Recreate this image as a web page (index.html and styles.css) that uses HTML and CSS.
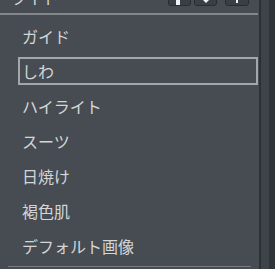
FILE: index.html
```html
<!DOCTYPE html>
<html lang="ja">
<head>
  <meta charset="UTF-8">
  <meta name="viewport" content="width=device-width, initial-scale=1.0">
  <title>レタッチ</title>
  <link rel="stylesheet" href="styles.css">
</head>
<body>
  <div class="app">
    <div class="panel">
      <div class="panel-head">
        <span class="panel-title">ライト</span>
        <div class="tools">
          <button class="tool tool-a"><span class="bar"></span></button>
          <button class="tool tool-b">
            <svg width="10" height="6" viewBox="0 0 10 6"><path d="M0 0 L10 0 L5 5 Z" fill="#f2f2f2"/></svg>
          </button>
          <button class="tool tool-c"><span class="dot"></span></button>
        </div>
      </div>
      <hr class="rule rule-top">
      <ul class="menu">
        <li class="menu-item">ガイド</li>
        <li class="menu-item is-selected">しわ</li>
        <li class="menu-item">ハイライト</li>
        <li class="menu-item">スーツ</li>
        <li class="menu-item">日焼け</li>
        <li class="menu-item">褐色肌</li>
        <li class="menu-item">デフォルト画像</li>
      </ul>
      <hr class="rule rule-bottom">
    </div>
    <div class="scrollbar">
      <div class="track"></div>
    </div>
  </div>
</body>
</html>
```

FILE: styles.css
```css
body {
  margin: 0;
  padding: 0;
  background-color: #464c52;
  color: #d3d6d8;
  font-family: "Noto Sans CJK JP", "Noto Sans", sans-serif;
  overflow: hidden;
}
.app {
  display: flex;
  width: 275px;
  height: 269px;
  overflow: hidden;
}
.panel {
  width: 261px;
  display: flex;
  flex-direction: column;
}
.panel-head {
  display: flex;
  align-items: flex-end;
  height: 20px;
  margin-top: -14px;
  padding-left: 10px;
  padding-right: 10px;
}
.panel-title {
  font-size: 16px;
  line-height: 16px;
  margin-bottom: 1px;
}
.tools {
  display: flex;
  margin-left: auto;
}
.tool {
  width: 23px;
  height: 20px;
  padding: 0;
  background: #3a3f45;
  border: 1px solid #292d32;
  border-radius: 3px;
  display: flex;
  align-items: flex-end;
  justify-content: center;
}
.tool-b {
  margin-left: 3px;
  padding-bottom: 1px;
}
.tool-c {
  width: 24px;
  margin-left: 8px;
}
.tool .bar {
  width: 4px;
  height: 16px;
  margin-right: 3px;
  background: #f2f2f2;
}
.tool .dot {
  width: 2px;
  height: 14px;
  margin-bottom: 2px;
  background: #f2f2f2;
}
.rule {
  border: none;
  margin: 0;
  padding: 0;
}
.rule-top {
  height: 2px;
  width: 258px;
  margin-top: 7px;
  background: #82878b;
}
.menu {
  list-style: none;
  margin: 7px 0 0 18px;
  padding: 0;
  display: flex;
  flex-direction: column;
  gap: 7px;
}
.menu-item {
  box-sizing: border-box;
  width: 240px;
  height: 28px;
  padding-left: 2px;
  border: 2px solid transparent;
  font-size: 16px;
  line-height: 24px;
}
.menu-item.is-selected {
  border-color: #a3a7aa;
}
.rule-bottom {
  height: 1px;
  width: 243px;
  margin: 6px 0 0 8px;
  background: #777c80;
}
.scrollbar {
  width: 14px;
  display: flex;
  border-left: 2px solid #2c3135;
  background: #2f3439;
}
.track {
  width: 8px;
  background: #3d4349;
}
```
